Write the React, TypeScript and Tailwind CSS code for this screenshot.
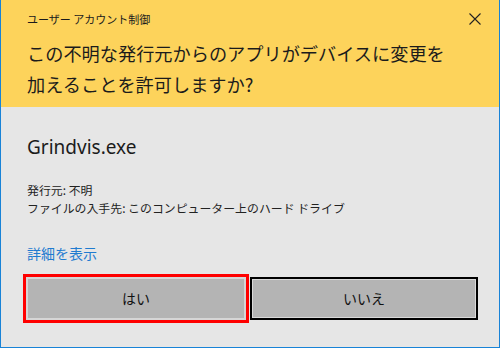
import React from 'react';

const jp = { fontFamily: '"Noto Sans CJK JP", "Noto Sans", sans-serif' };

export default function App() {
  return (
    <div
      className="w-[500px] h-[348px] flex flex-col border-x border-b border-[#1883d7] bg-[#e6e6e6] overflow-hidden text-black"
      style={jp}
    >
      <header className="h-[107px] shrink-0 bg-[#fdd35b] pl-[26px] pr-[17px]">
        <div className="flex items-center justify-between h-[38px]">
          <span className="text-[11px] leading-none text-[#1b1b1b]">ユーザー アカウント制御</span>
          <svg width="12" height="12" viewBox="0 0 12 12" className="mr-[1px]">
            <path d="M0.5 0.5 L11.5 11.5 M11.5 0.5 L0.5 11.5" stroke="#222" strokeWidth="1.1" fill="none" />
          </svg>
        </div>
        <h1 className="text-[18.2px] leading-[31px] font-normal text-[#1b1b1b]">
          この不明な発行元からのアプリがデバイスに変更を
          <br />
          加えることを許可しますか?
        </h1>
      </header>

      <main className="flex-1 flex flex-col pl-[26px]">
        <div
          className="mt-[27px] text-[19px] leading-[26px] text-[#1b1b1b]"
          style={{ fontFamily: '"Noto Sans", "Open Sans", sans-serif' }}
        >
          Grindvis.exe
        </div>
        <div className="mt-[21px] text-[11.9px] leading-[18px] text-[#222]">
          <div>発行元: 不明</div>
          <div>ファイルの入手先: このコンピューター上のハード ドライブ</div>
        </div>
        <a className="mt-[27px] text-[14px] leading-[18px] text-[#1f7bd0] w-fit cursor-pointer">詳細を表示</a>

        <div className="mt-[15px] flex gap-[4px] -ml-[1px]">
          <div className="relative">
            <button className="w-[220px] h-[43px] bg-[#b4b4b4] border-2 border-[#d6d6d6] text-[14px] text-[#111]">
              はい
            </button>
            <span className="absolute -inset-[3px] border-[3px] border-[#ff0000] pointer-events-none" />
          </div>
          <button className="w-[228px] h-[43px] bg-[#b4b4b4] border-2 border-black shadow-[inset_0_0_0_1px_#d9d9d9] text-[14px] text-[#111]">
            いいえ
          </button>
        </div>
      </main>
    </div>
  );
}
